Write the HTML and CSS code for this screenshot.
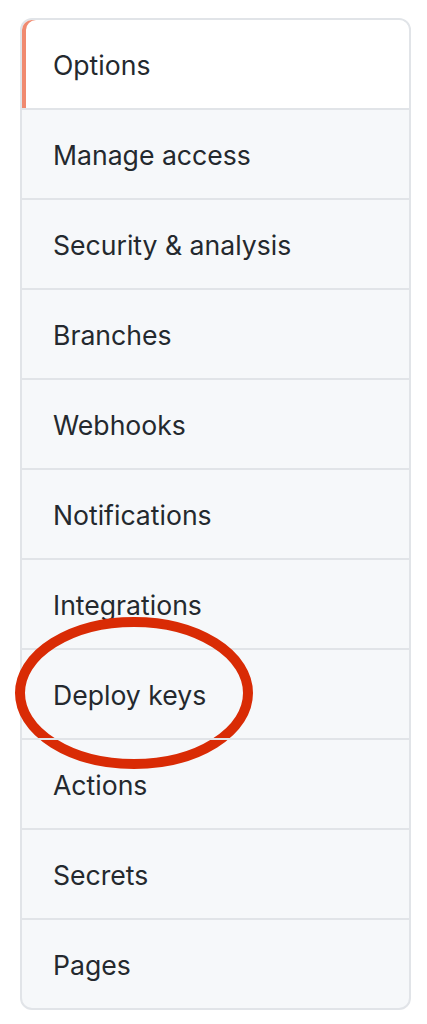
FILE: index.html
```html
<!DOCTYPE html>
<html lang="en">
<head>
  <meta charset="UTF-8" />
  <meta name="viewport" content="width=device-width, initial-scale=1.0"/>
  <title>Settings menu</title>
  <link rel="stylesheet" href="styles.css">
</head>
<body>

  <nav class="menu">
    <a class="menu-item selected" href="#">Options</a>
    <a class="menu-item" href="#">Manage access</a>
    <a class="menu-item" href="#">Security &amp; analysis</a>
    <a class="menu-item" href="#">Branches</a>
    <a class="menu-item" href="#">Webhooks</a>
    <a class="menu-item" href="#">Notifications</a>
    <a class="menu-item" href="#">Integrations</a>
    <a class="menu-item" href="#">
      Deploy keys
      <!-- hand-drawn highlight -->
      <svg class="circle-mark" width="260" height="170" viewBox="0 0 260 170">
        <ellipse cx="134" cy="85" rx="114" ry="71" fill="none" stroke="#d92b05" stroke-width="10"/>
      </svg>
    </a>
    <a class="menu-item" href="#">Actions</a>
    <a class="menu-item" href="#">Secrets</a>
    <a class="menu-item" href="#">Pages</a>
  </nav>

</body>
</html>
```

FILE: styles.css
```css
:root {
  --text: #24292e;
  --bg: #f6f8fa;
  --border: #e1e4e8;
  --accent: #f08a70;
}

body {
  margin: 0;
  background: #fff;
  font-family: Inter, 'Liberation Sans', sans-serif;
}

.menu {
  width: 391px;
  margin: 18px 0 0 20px;
  box-sizing: border-box;
  border: 2px solid var(--border);
  border-radius: 12px;
  background: var(--bg);
  display: flex;
  flex-direction: column;
}

.menu-item {
  position: relative;
  height: 88px;
  box-sizing: border-box;
  display: flex;
  align-items: center;
  padding: 2px 0 0 31px;
  font-size: 26.6px;
  color: var(--text);
  text-decoration: none;
  border-top: 2px solid var(--border);
}

.menu-item + .menu-item {
  height: 90px;
}

.menu-item:first-child {
  border-top: none;
  border-radius: 10px 10px 0 0;
}

.menu-item:last-child {
  border-radius: 0 0 10px 10px;
}

.menu-item.selected {
  background: #fff;
  box-shadow: inset 4px 0 0 var(--accent);
}

.circle-mark {
  position: absolute;
  left: -22px;
  top: -42px;
  pointer-events: none;
}
```
